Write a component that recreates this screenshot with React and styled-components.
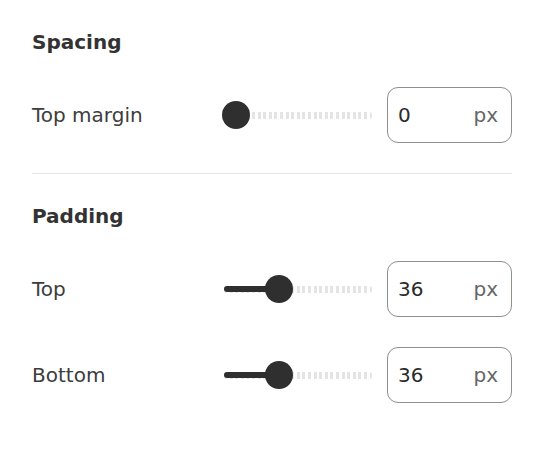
import React from "react";
import styled, { createGlobalStyle } from "styled-components";

const Global = createGlobalStyle`
  html, body { margin: 0; padding: 0; background: #ffffff; }
  body { font-family: "DejaVu Sans", "Liberation Sans", sans-serif; }
`;

const Panel = styled.div`
  width: 480px;
  padding: 32px 40px 40px 32px;
  display: flex;
  flex-direction: column;
`;

const Section = styled.section`
  display: flex;
  flex-direction: column;
  gap: 30px;
`;

const Heading = styled.h3`
  margin: 0 0 5px 0;
  font-size: 20px;
  line-height: 20px;
  font-weight: 700;
  color: #333333;
`;

const Divider = styled.hr`
  border: none;
  height: 1px;
  background: #e6e6e6;
  margin: 30px 0 32px 0;
  width: 480px;
`;

const Row = styled.div`
  display: flex;
  align-items: center;
  height: 56px;
`;

const Label = styled.span`
  width: 190px;
  font-size: 20px;
  color: #3d3d3d;
`;

const SliderWrap = styled.div`
  position: relative;
  width: 150px;
  height: 28px;
  margin-right: 15px;
`;

const TrackRest = styled.div`
  position: absolute;
  left: 2px;
  right: 0;
  top: 11px;
  height: 7px;
  border-radius: 3px;
  background: repeating-linear-gradient(
    to right,
    #e4e4e4 0px,
    #e4e4e4 3px,
    transparent 3px,
    transparent 5.6px
  );
`;

const TrackFill = styled.div`
  position: absolute;
  left: 2px;
  top: 11px;
  height: 6px;
  border-radius: 3px;
  background: #2f2f2f;
`;

const Thumb = styled.div`
  position: absolute;
  top: 0;
  width: 28px;
  height: 28px;
  border-radius: 50%;
  background: #2f2f2f;
`;

const InputBox = styled.div`
  box-sizing: border-box;
  width: 125px;
  height: 56px;
  border: 1px solid #8f8f8f;
  border-radius: 11px;
  display: flex;
  align-items: center;
  justify-content: space-between;
  padding: 0 13px 0 10px;
`;

const Value = styled.span`
  font-size: 20px;
  color: #2b2b2b;
`;

const Unit = styled.span`
  font-size: 20px;
  color: #666666;
`;

function Slider({ value, max = 100 }) {
  const span = 150 - 28 - 2;
  const left = 2 + (value / max) * span;
  return (
    <SliderWrap>
      <TrackRest />
      {value > 0 && <TrackFill style={{ width: left + 4 }} />}
      <Thumb style={{ left: left - 2 }} />
    </SliderWrap>
  );
}

function Control({ label, value }) {
  return (
    <Row>
      <Label>{label}</Label>
      <Slider value={value} />
      <InputBox>
        <Value>{value}</Value>
        <Unit>px</Unit>
      </InputBox>
    </Row>
  );
}

export default function App() {
  return (
    <>
      <Global />
      <Panel>
        <Section>
          <Heading>Spacing</Heading>
          <Control label="Top margin" value={0} />
        </Section>
        <Divider />
        <Section>
          <Heading>Padding</Heading>
          <Control label="Top" value={36} />
          <Control label="Bottom" value={36} />
        </Section>
      </Panel>
    </>
  );
}
